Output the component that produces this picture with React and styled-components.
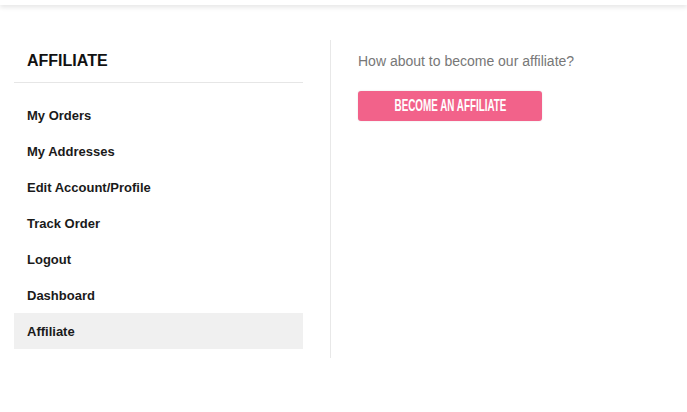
import styled, {createGlobalStyle} from 'styled-components';

const GlobalStyle = createGlobalStyle`
body {
    margin: 0;
    background: #fff;
    font-family: "Liberation Sans", Arial, sans-serif;
}
`;

const TopBar = styled.div`
height: 5px;
background: #fff;
box-shadow: 0 2px 5px rgba(0, 0, 0, 0.12);
`;

const Page = styled.div`
display: flex;
padding-top: 35px;
`;

const Sidebar = styled.aside`
width: 289px;
padding: 0 27px 9px 14px;
border-right: 1px solid #e8e8e8;
`;

const SideTitle = styled.h3`
margin: 0;
padding: 12px 13px;
font-size: 16px;
line-height: 18px;
font-weight: 700;
color: #111;
border-bottom: 1px solid #e6e6e6;
`;

const Menu = styled.ul`
list-style: none;
margin: 14px 0 0;
padding: 0;
`;

const MenuItem = styled.li`
height: 36px;
display: flex;
align-items: center;
padding: 0 13px;
font-size: 13px;
font-weight: 700;
color: #1a1a1a;
background: ${props => props.$active ? '#f0f0f0' : 'transparent'};
`;

const Content = styled.section`
padding: 12px 27px 0;
`;

const Intro = styled.p`
margin: 0;
font-size: 14px;
line-height: 18px;
color: #777;
`;

const AffiliateButton = styled.button`
margin-top: 21px;
width: 184px;
height: 30px;
border: none;
border-radius: 3px;
background: #f2628a;
box-shadow: 0 0 2px rgba(0, 0, 0, 0.12);
color: #fff;
display: flex;
align-items: center;
justify-content: center;
padding: 0;
cursor: pointer;
`;

const ButtonLabel = styled.span`
display: inline-block;
font-family: "Liberation Sans", Arial, sans-serif;
font-size: 17px;
font-weight: 700;
transform: scaleX(0.58);
white-space: nowrap;
`;

const items = [
    'My Orders',
    'My Addresses',
    'Edit Account/Profile',
    'Track Order',
    'Logout',
    'Dashboard',
    'Affiliate'
];

function App() {
    return (
        <>
            <GlobalStyle/>
            <TopBar/>
            <Page>
                <Sidebar>
                    <SideTitle>AFFILIATE</SideTitle>
                    <Menu>
                        {items.map(item => (
                            <MenuItem key={item} $active={item === 'Affiliate'}>{item}</MenuItem>
                        ))}
                    </Menu>
                </Sidebar>
                <Content>
                    <Intro>How about to become our affiliate?</Intro>
                    <AffiliateButton>
                        <ButtonLabel>BECOME AN AFFILIATE</ButtonLabel>
                    </AffiliateButton>
                </Content>
            </Page>
        </>
    );
}

export default App;
